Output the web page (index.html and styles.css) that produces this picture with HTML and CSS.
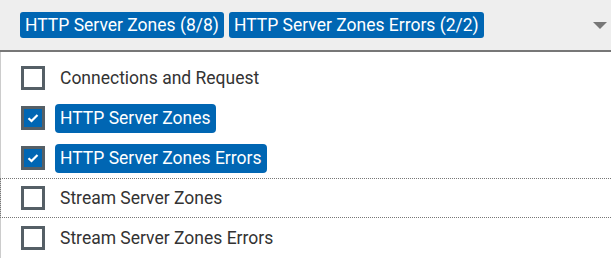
FILE: index.html
```html
<!DOCTYPE html>
<html lang="en">
<head>
    <meta charset="UTF-8">
    <title>Zones Select</title>
    <link rel="stylesheet" href="styles.css">
</head>
<body>
    <div class="select">
        <div class="select-head">
            <span class="tag">HTTP Server Zones (8/8)</span>
            <span class="tag">HTTP Server Zones Errors (2/2)</span>
            <span class="caret"></span>
        </div>
        <ul class="options">
            <li class="option">
                <span class="box"></span>
                <span class="label">Connections and Request</span>
            </li>
            <li class="option checked">
                <span class="box"><svg width="12" height="10" viewBox="0 0 12 10"><path d="M1.5 5.2 L4.5 8 L10.5 2" fill="none" stroke="#fff" stroke-width="2.2"/></svg></span>
                <span class="label">HTTP Server Zones</span>
            </li>
            <li class="option checked">
                <span class="box"><svg width="12" height="10" viewBox="0 0 12 10"><path d="M1.5 5.2 L4.5 8 L10.5 2" fill="none" stroke="#fff" stroke-width="2.2"/></svg></span>
                <span class="label">HTTP Server Zones Errors</span>
            </li>
            <li class="option focused">
                <span class="box"></span>
                <span class="label">Stream Server Zones</span>
            </li>
            <li class="option">
                <span class="box"></span>
                <span class="label">Stream Server Zones Errors</span>
            </li>
        </ul>
    </div>
</body>
</html>
```

FILE: styles.css
```css
body {
    margin: 0;
    font-family: Roboto, "Liberation Sans", sans-serif;
    background: #fff;
    color: #333;
    overflow: hidden;
}
.select {
    width: 611px;
}
.select-head {
    display: flex;
    align-items: center;
    gap: 5px;
    height: 50px;
    padding: 0 20px;
    background: #eeeeee;
    border-bottom: 2px solid #777;
    box-sizing: content-box;
}
.tag {
    background: #0066b3;
    color: #fff;
    font-size: 17.5px;
    line-height: 26px;
    padding: 0 5px;
    border-radius: 3px;
}
.caret {
    margin-left: auto;
    margin-right: -16px;
    width: 0;
    height: 0;
    border-left: 7px solid transparent;
    border-right: 7px solid transparent;
    border-top: 7px solid #777;
}
.options {
    list-style: none;
    margin: 0;
    padding: 6px 0 0;
    border-left: 1px solid #ccc;
}
.option {
    display: flex;
    align-items: center;
    height: 40px;
    box-sizing: border-box;
    padding-left: 20px;
    font-size: 17.5px;
}
.option.focused {
    border: 1px dotted #777;
    border-right: none;
    margin-left: -1px;
}
.box {
    width: 18px;
    height: 18px;
    border: 3px solid #555f66;
    display: flex;
    align-items: center;
    justify-content: center;
    margin-right: 10px;
}
.checked .box {
    background: #0066b3;
}
.label {
    padding: 0 5px;
    line-height: 29px;
    border-radius: 4px;
}
.checked .label {
    background: #0066b3;
    color: #fff;
}
```
